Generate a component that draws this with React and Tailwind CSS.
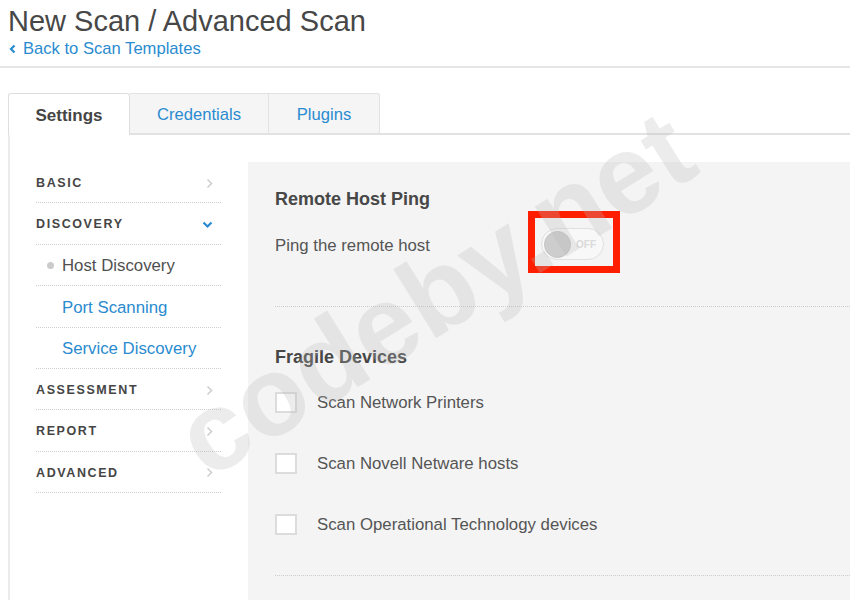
import React from 'react';

const BLUE = 'text-[#2a8bd0]';

function ChevronRight() {
  return (
    <svg width="7" height="11" viewBox="0 0 7 11" className="shrink-0">
      <polyline points="1.5,1.5 5.5,5.5 1.5,9.5" fill="none" stroke="#cfcfcf" strokeWidth="1.6" />
    </svg>
  );
}

function ChevronDown() {
  return (
    <svg width="11" height="8" viewBox="0 0 11 8" className="shrink-0">
      <polyline points="1.5,1.5 5.5,5.5 9.5,1.5" fill="none" stroke="#2a8bd0" strokeWidth="2.2" />
    </svg>
  );
}

function NavHeading({ label, open }) {
  return (
    <div className="h-[41.4px] flex items-center justify-between pr-[8px] pt-[2px] border-b border-dotted border-[#cfcfcf]">
      <span className="text-[12.5px] font-bold tracking-[1.6px] text-[#454545]">{label}</span>
      {open ? <ChevronDown /> : <ChevronRight />}
    </div>
  );
}

function NavSub({ label, active }) {
  return (
    <div className="h-[41.4px] flex items-center pt-[2px] border-b border-dotted border-[#cfcfcf]">
      <span className="w-[26px] flex justify-center pl-[2px]">
        {active && <span className="w-[7px] h-[7px] rounded-full bg-[#cbcbcb]" />}
      </span>
      <span className={`text-[16.8px] ${active ? 'text-[#505050]' : BLUE}`}>{label}</span>
    </div>
  );
}

function Check({ label }) {
  return (
    <div className="h-[21px] flex items-center gap-[20px]">
      <span className="w-[22px] h-[21px] bg-white border-2 border-[#dcdcdc]" />
      <span className="text-[16.8px] text-[#555]">{label}</span>
    </div>
  );
}

export default function App() {
  return (
    <div className="relative w-[856px] h-[600px] overflow-hidden bg-white font-['Liberation_Sans',Arial,sans-serif]">
      <div className="w-[850px]">
        {/* header */}
        <div className="pl-2 pt-[5px]">
          <h1 className="text-[29px] leading-[32px] text-[#474747]">New Scan / Advanced Scan</h1>
          <div className="mt-[2px] flex items-center gap-[7px] pl-[1px] h-[20px]">
            <svg width="7" height="10" viewBox="0 0 7 10">
              <polyline points="5.5,1.5 2,5 5.5,8.5" fill="none" stroke="#2a8bd0" strokeWidth="2.2" />
            </svg>
            <span className={`text-[16.6px] ${BLUE}`}>Back to Scan Templates</span>
          </div>
        </div>
        <div className="mt-[7px] border-t-2 border-[#e6e6e6]" />

        {/* tabs */}
        <div className="mt-[25px] flex pl-2 h-[42px]">
          <div className="w-[122px] h-full flex items-center justify-center pt-[2px] bg-white border border-b-0 border-[#dedede] rounded-t-[3px] text-[17px] font-bold text-[#454545]">
            Settings
          </div>
          <div className={`w-[139px] h-full flex items-center justify-center pt-[4px] bg-[#f5f5f5] border border-l-0 border-b-2 border-[#e2e2e2] text-[16.6px] ${BLUE}`}>
            Credentials
          </div>
          <div className={`w-[111px] h-full flex items-center justify-center pt-[4px] bg-[#f5f5f5] border border-l-0 border-b-2 border-[#e2e2e2] rounded-tr-[3px] text-[16.6px] ${BLUE}`}>
            Plugins
          </div>
          <div className="flex-1 border-b-2 border-[#e2e2e2]" />
        </div>

        {/* panel */}
        <div className="ml-2 border-l-2 border-[#ebebeb] pl-[26px] pt-[27px] flex gap-[27px] h-[465px]">
          <nav className="w-[185px] shrink-0">
            <NavHeading label="BASIC" />
            <NavHeading label="DISCOVERY" open />
            <NavSub label="Host Discovery" active />
            <NavSub label="Port Scanning" />
            <NavSub label="Service Discovery" />
            <NavHeading label="ASSESSMENT" />
            <NavHeading label="REPORT" />
            <NavHeading label="ADVANCED" />
          </nav>

          <div className="flex-1 bg-[#f4f4f4] pl-[27px] pt-[25px]">
            <h2 className="text-[18px] leading-[24px] font-bold text-[#474747]">Remote Host Ping</h2>
            <div className="mt-[17px] flex items-center h-[32px]">
              <span className="w-[266px] text-[16.8px] text-[#555] pt-[3px]">Ping the remote host</span>
              <div className="relative">
                <div className="w-[63px] h-[32px] rounded-full border border-[#e0e0e0] bg-[#f8f8f8] flex items-center pl-[2px] gap-[5px]">
                  <span className="w-[27px] h-[27px] rounded-full bg-[#cdcdcd] border border-[#c4c4c4]" />
                  <span className="text-[10px] font-bold text-[#dadada]">OFF</span>
                </div>
                <div className="absolute left-[-13px] top-[-17px] w-[92px] h-[62px] border-[7px] border-[#ff1e00]" />
              </div>
            </div>
            <div className="mt-[46px] border-t border-dotted border-[#cccccc]" />

            <h2 className="mt-[38px] text-[18px] leading-[24px] font-bold text-[#474747]">Fragile Devices</h2>
            <div className="mt-[23px] flex flex-col gap-[40px]">
              <Check label="Scan Network Printers" />
              <Check label="Scan Novell Netware hosts" />
              <Check label="Scan Operational Technology devices" />
            </div>
            <div className="mt-[40px] border-t border-dotted border-[#cccccc]" />
          </div>
        </div>
      </div>

      {/* watermark */}
      <div className="pointer-events-none absolute left-[435px] top-[294px] -translate-x-1/2 -translate-y-1/2 -rotate-[32deg] whitespace-nowrap text-[112px] leading-none font-bold text-[rgba(185,185,185,0.27)]">
        codeby.net
      </div>
    </div>
  );
}
